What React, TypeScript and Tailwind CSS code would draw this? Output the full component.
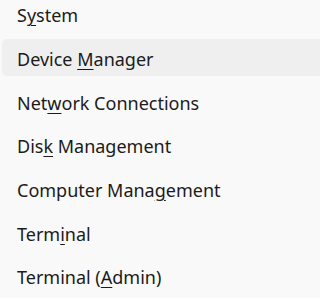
import React from "react";

const items: { pre: string; key: string; post: string; active?: boolean }[] = [
  { pre: "S", key: "y", post: "stem" },
  { pre: "Device ", key: "M", post: "anager", active: true },
  { pre: "Net", key: "w", post: "ork Connections" },
  { pre: "Dis", key: "k", post: " Management" },
  { pre: "Computer Mana", key: "g", post: "ement" },
  { pre: "Term", key: "i", post: "nal" },
  { pre: "Terminal (", key: "A", post: "dmin)" },
];

export default function App() {
  return (
    <div
      className="w-full min-w-[248px] h-[298px] overflow-hidden bg-[#f9f9f9] text-[#1b1b1b]"
      style={{ fontFamily: '"Noto Sans", "Open Sans", sans-serif' }}
    >
      <div className="mt-[-8px] flex flex-col">
        {items.map((it, i) => (
          <div key={i} className="h-[43.7px] py-[3.35px] pl-[2px]">
            <div
              className={
                "h-full rounded-l-[5px] flex items-center pl-[15px] pt-[3px] text-[18px] leading-none whitespace-nowrap " +
                (it.active ? "bg-[#efefef]" : "")
              }
            >
              <span>
                {it.pre}
                <span className="underline decoration-1 underline-offset-[3px]">{it.key}</span>
                {it.post}
              </span>
            </div>
          </div>
        ))}
      </div>
    </div>
  );
}
